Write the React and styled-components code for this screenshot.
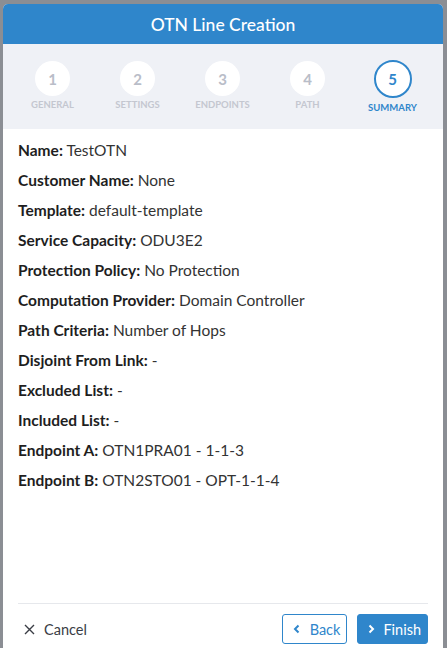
import React from "react";
import styled, { createGlobalStyle } from "styled-components";

const GlobalStyle = createGlobalStyle`
  html, body {
    margin: 0;
    padding: 0;
    height: 100%;
    overflow: hidden;
  }
  body {
    background: #8b8e94;
    font-family: Lato, "Noto Sans", sans-serif;
  }
`;

const steps = [
  { n: 1, label: "General" },
  { n: 2, label: "Settings" },
  { n: 3, label: "Endpoints" },
  { n: 4, label: "Path" },
  { n: 5, label: "Summary", active: true },
];

const summary = [
  ["Name", "TestOTN"],
  ["Customer Name", "None"],
  ["Template", "default-template"],
  ["Service Capacity", "ODU3E2"],
  ["Protection Policy", "No Protection"],
  ["Computation Provider", "Domain Controller"],
  ["Path Criteria", "Number of Hops"],
  ["Disjoint From Link", "-"],
  ["Excluded List", "-"],
  ["Included List", "-"],
  ["Endpoint A", "OTN1PRA01 - 1-1-3"],
  ["Endpoint B", "OTN2STO01 - OPT-1-1-4"],
];

const Backdrop = styled.div`
  height: 648px;
  padding: 4px 4px 0 3px;
  box-sizing: border-box;
`;

const Modal = styled.div`
  width: 440px;
  height: 660px;
  background: #fff;
  border-radius: 5px 5px 0 0;
  overflow: hidden;
  display: flex;
  flex-direction: column;
`;

const Header = styled.div`
  height: 40px;
  background: #2f86cb;
  color: #fff;
  display: flex;
  align-items: center;
  justify-content: center;
  font-size: 17.5px;
  font-weight: 500;
`;

const Stepper = styled.div`
  height: 85px;
  background: #eff1f6;
  display: grid;
  grid-template-columns: repeat(5, 85px);
  padding: 0 7px;
  box-sizing: border-box;
`;

const Step = styled.div`
  display: flex;
  flex-direction: column;
  align-items: center;
  padding-top: ${(p) => (p.$active ? "16px" : "17px")};
`;

const Circle = styled.div`
  width: ${(p) => (p.$active ? "38px" : "35px")};
  height: ${(p) => (p.$active ? "38px" : "35px")};
  box-sizing: border-box;
  border-radius: 50%;
  background: #fff;
  border: ${(p) => (p.$active ? "2px solid #2f86cb" : "none")};
  color: ${(p) => (p.$active ? "#2f86cb" : "#b9bdc8")};
  display: flex;
  align-items: center;
  justify-content: center;
  font-size: 15px;
  font-weight: 700;
`;

const StepLabel = styled.div`
  margin-top: ${(p) => (p.$active ? "4px" : "3px")};
  font-size: 9.5px;
  font-weight: 700;
  text-transform: uppercase;
  color: ${(p) => (p.$active ? "#2f86cb" : "#c4c7d0")};
`;

const Body = styled.div`
  height: 474px;
  padding: 12px 15px 0;
  box-sizing: border-box;
  display: flex;
  flex-direction: column;
`;

const Row = styled.div`
  height: 30px;
  line-height: 18px;
  font-size: 15.5px;
  color: #333;
`;

const Key = styled.span`
  font-weight: 700;
  color: #1e1e1e;
`;

const Footer = styled.div`
  margin: 0 15px;
  border-top: 1px solid #e6e8ec;
  padding: 10px 0 0;
  display: flex;
  align-items: flex-start;
  justify-content: space-between;
`;

const Cancel = styled.button`
  border: none;
  background: none;
  display: flex;
  align-items: center;
  gap: 9px;
  font-family: inherit;
  font-size: 14.5px;
  color: #3a3d45;
  height: 30px;
  padding: 0 6px;
`;

const Actions = styled.div`
  display: flex;
  gap: 10px;
`;

const Button = styled.button`
  height: 30px;
  box-sizing: border-box;
  border-radius: 3px;
  border: 1px solid #2f86cb;
  background: ${(p) => (p.$primary ? "#2f86cb" : "#fff")};
  color: ${(p) => (p.$primary ? "#fff" : "#2f86cb")};
  display: flex;
  align-items: center;
  gap: ${(p) => (p.$primary ? "8px" : "9px")};
  padding: ${(p) => (p.$primary ? "0 6px 0 9px" : "0 6px 0 10px")};
  font-family: inherit;
  font-size: 14.5px;
  font-weight: 400;
`;

const Chevron = ({ dir }) => (
  <svg width="8" height="10" viewBox="0 0 8 10">
    <path
      d={dir === "left" ? "M5.5 1.5 L2 5 L5.5 8.5" : "M2.5 1.5 L6 5 L2.5 8.5"}
      fill="none"
      stroke="currentColor"
      strokeWidth="2"
    />
  </svg>
);

const CrossIcon = () => (
  <svg width="11" height="11" viewBox="0 0 11 11">
    <path d="M1 1 L10 10 M10 1 L1 10" stroke="currentColor" strokeWidth="1.4" />
  </svg>
);

export default function App() {
  return (
    <>
      <GlobalStyle />
      <Backdrop>
        <Modal>
          <Header>OTN Line Creation</Header>
          <Stepper>
            {steps.map((s) => (
              <Step key={s.n} $active={s.active}>
                <Circle $active={s.active}>{s.n}</Circle>
                <StepLabel $active={s.active}>{s.label}</StepLabel>
              </Step>
            ))}
          </Stepper>
          <Body>
            {summary.map(([k, v]) => (
              <Row key={k}>
                <Key>{k}:</Key> {v}
              </Row>
            ))}
          </Body>
          <Footer>
            <Cancel>
              <CrossIcon />
              Cancel
            </Cancel>
            <Actions>
              <Button>
                <Chevron dir="left" />
                Back
              </Button>
              <Button $primary>
                <Chevron dir="right" />
                Finish
              </Button>
            </Actions>
          </Footer>
        </Modal>
      </Backdrop>
    </>
  );
}
